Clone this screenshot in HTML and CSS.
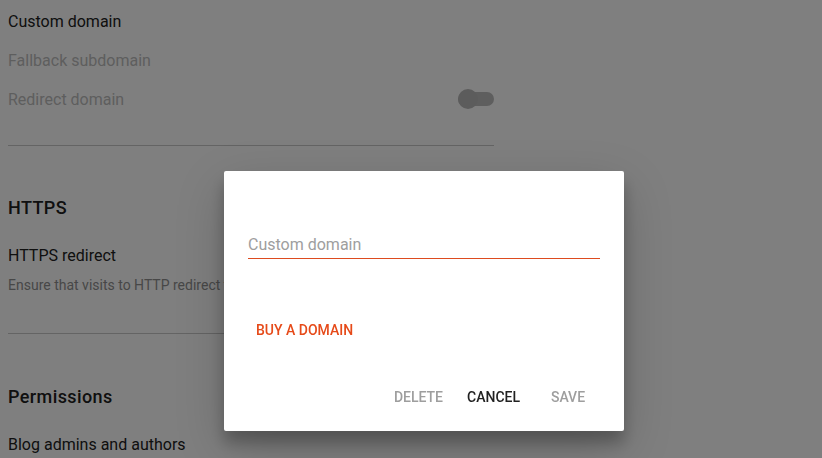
FILE: index.html
```html
<!DOCTYPE HTML>
<html>
  <head>
    <meta http-equiv="Content-type" content="text/html;charset=UTF-8">
    <title>Publishing settings</title>
    <link rel="stylesheet" href="styles.css">
  </head>
  <body>
    <div class="settings">
      <div class="row">Custom domain</div>
      <div class="row muted">Fallback subdomain</div>
      <div class="row muted toggle-row">
        <span>Redirect domain</span>
        <span class="toggle"><span class="knob"></span></span>
      </div>
      <hr class="divider">

      <h2 class="section">HTTPS</h2>
      <div class="row title">HTTPS redirect</div>
      <div class="hint">Ensure that visits to HTTP redirect to HTTPS</div>
      <hr class="divider">

      <h2 class="section">Permissions</h2>
      <div class="row title">Blog admins and authors</div>
    </div>

    <div class="scrim"></div>

    <div class="dialog">
      <div class="field">
        <input class="domain" type="text" placeholder="Custom domain">
      </div>
      <div class="link-row">
        <button class="btn accent">Buy a domain</button>
      </div>
      <div class="actions">
        <button class="btn disabled">Delete</button>
        <button class="btn">Cancel</button>
        <button class="btn disabled">Save</button>
      </div>
    </div>
  </body>
</html>
```

FILE: styles.css
```css
html, body {
margin: 0;
font-family: Roboto, "Liberation Sans", sans-serif;
color: #212121;
background: #fff;
}
.settings {
width: 486px;
padding: 0 0 0 8px;
}
.row {
font-size: 16px;
height: 39px;
line-height: 44px;
}
.muted {
color: #bdbdbd;
}
.toggle-row {
display: flex;
justify-content: space-between;
align-items: center;
line-height: normal;
padding-top: 4px;
box-sizing: border-box;
}
.toggle {
position: relative;
width: 36px;
height: 14px;
border-radius: 7px;
background: #bdbdbd;
margin-top: -2px;
}
.knob {
position: absolute;
left: 0;
top: -3px;
width: 20px;
height: 20px;
border-radius: 50%;
background: #b8b8b8;
}
.divider {
border: 0;
border-top: 1px solid #c8c8c8;
margin: 28px 0 0;
}
.section {
font-size: 18px;
font-weight: 500;
letter-spacing: 0.4px;
margin: 52px 0 28px;
line-height: 20px;
}
.hint + .divider + .section {
margin-top: 53px;
}
.title {
height: auto;
line-height: 20px;
}
.hint {
font-size: 14px;
color: #8f8f8f;
margin-top: 9px;
margin-bottom: 38px;
line-height: 20px;
}
.hint + .divider {
margin-top: 0;
}
.scrim {
position: fixed;
inset: 0;
background: rgba(0, 0, 0, 0.5);
}
.dialog {
position: absolute;
left: 224px;
top: 171px;
width: 400px;
height: 260px;
box-sizing: border-box;
background: #fff;
border-radius: 2px;
box-shadow: 0 12px 15px rgba(0, 0, 0, 0.24), 0 17px 50px rgba(0, 0, 0, 0.19);
padding: 64px 24px 16px;
display: flex;
flex-direction: column;
}
.field {
border-bottom: 1px solid #dd4b1f;
}
.domain {
border: 0;
outline: 0;
padding: 0 0 4px;
width: 100%;
font: 16px Roboto, "Liberation Sans", sans-serif;
color: #212121;
}
.domain::placeholder {
color: #9e9e9e;
}
.link-row {
margin-top: 53px;
}
.btn {
border: 0;
background: none;
font-family: Roboto, "Liberation Sans", sans-serif;
font-size: 14px;
font-weight: 500;
text-transform: uppercase;
color: #212121;
height: 36px;
min-width: 64px;
padding: 0 8px;
cursor: pointer;
}
.accent {
color: #e64a19;
}
.disabled {
color: #9e9e9e;
}
.actions {
margin-top: auto;
display: flex;
justify-content: flex-end;
gap: 8px;
}
```
